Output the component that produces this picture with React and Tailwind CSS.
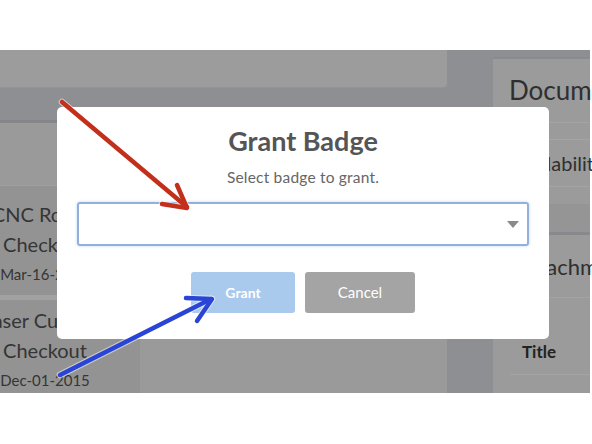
const font = "font-['Lato','Open_Sans',sans-serif]";

function CheckoutCard({ title, date, shift }) {
  return (
    <div className="w-[90px] flex flex-col items-center text-[#353535]">
      <div className={"whitespace-nowrap text-[20px] leading-[30px] " + shift}>{title}</div>
      <div className="whitespace-nowrap text-[20px] leading-[30px]">Checkout</div>
      <div className="whitespace-nowrap text-[15px] leading-[22px] mt-[4px]">{date}</div>
    </div>
  );
}

function MainColumn() {
  return (
    <div className="w-[447px] flex flex-col">
      <div className="h-[38px] bg-[#9c9c9c] rounded-br-[4px] border-b border-[#949494]" />
      <div className="h-[32px]" />
      <div className="flex-1 flex flex-col bg-[#9a9a9a] border-t-[3px] border-[#85868a]">
        <div className="h-[62px]" />
        <div className="flex-1 flex">
          <div className="w-[140px] bg-[#939393] border-t border-[#a0a0a0] flex flex-col">
            <div className="h-[109px] pt-[13px]">
              <CheckoutCard title="CNC Router" date="Mar-16-2016" shift="" />
            </div>
            <div className="h-[5px] bg-[#a1a1a1]" />
            <div className="pt-[5px]">
              <CheckoutCard title="Laser Cutter" date="Dec-01-2015" shift="-translate-x-[9px]" />
            </div>
          </div>
        </div>
      </div>
    </div>
  );
}

function SidePanel() {
  return (
    <div className="w-[97px] mt-[7px] flex flex-col bg-[#9b9b9b] border-t-[2px] border-[#8a8b8f] text-[#2f2f2f]">
      <div className="h-[64px] flex items-center pl-[16px] text-[26px] whitespace-nowrap border-b border-[#a4a4a4]">
        Documents
      </div>
      <div className="h-[17px] border-b border-[#a4a4a4]" />
      <div className="h-[47px] flex items-center pl-[16px] text-[20px] whitespace-nowrap border-b border-[#a4a4a4]">
        Availability
      </div>
      <div className="h-[17px]" />
      <div className="h-[31px] bg-[#959595] border-b-[3px] border-[#88898d]" />
      <div className="h-[63px] flex items-center pl-[24px] text-[22px] whitespace-nowrap border-b border-[#a3a3a3]">
        Attachments
      </div>
      <div className="h-[31px]" />
      <div className="h-[45px] flex items-center pl-[29px] text-[17px] font-bold text-[#222]">Title</div>
      <div className="ml-[17px] border-t border-[#a4a4a4] flex-1" />
    </div>
  );
}

function Modal() {
  return (
    <div className="absolute left-[57px] top-[107px] w-[492px] h-[232px] bg-white rounded-[5px] flex flex-col items-center">
      <div className="mt-[18px] text-[27px] leading-[32px] font-bold text-[#555]">Grant Badge</div>
      <div className="mt-[10px] text-[15.5px] leading-[20px] tracking-[0.2px] text-[#666]">
        Select badge to grant.
      </div>
      <div className="mt-[15px] w-[452px] h-[44px] rounded-[3px] border-2 border-[#93b0da] shadow-[0_0_3px_rgba(110,150,215,0.45)] flex items-center justify-end pr-[8px]">
        <svg width="12" height="7" viewBox="0 0 12 7">
          <path d="M0 0 L12 0 L6 7 Z" fill="#8a8a8a" />
        </svg>
      </div>
      <div className="mt-[26px] flex gap-[10px]">
        <button className="w-[104px] h-[41px] rounded-[3px] bg-[#a9c9ed] text-white text-[14px] font-bold">
          Grant
        </button>
        <button className="w-[110px] h-[41px] rounded-[3px] bg-[#a4a4a4] text-white text-[15px]">
          Cancel
        </button>
      </div>
    </div>
  );
}

function Arrows() {
  return (
    <svg className="absolute inset-0 pointer-events-none" width="592" height="444" viewBox="0 0 592 444">
      <g fill="none" strokeLinecap="round" strokeLinejoin="round">
        <g stroke="#ffffff" strokeOpacity="0.55" strokeWidth="6.5">
          <path d="M62 102 L187 207" />
          <path d="M177 185 L187 208 L162 204" />
          <path d="M60 375 L211 299" />
          <path d="M186 298 L212 299 L197 321" />
        </g>
        <g stroke="#c2301b" strokeWidth="4.5">
          <path d="M62 102 L187 207" />
          <path d="M177 185 L187 208 L162 204" />
        </g>
        <g stroke="#2a44d6" strokeWidth="4.5">
          <path d="M60 375 L211 299" />
          <path d="M186 298 L212 299 L197 321" />
        </g>
      </g>
    </svg>
  );
}

export default function App() {
  return (
    <div className={"relative w-[592px] h-[444px] overflow-hidden bg-white " + font}>
      <div className="h-[50px]" />
      <div className="flex h-[343px] w-[590px] bg-[#8e8f93]">
        <MainColumn />
        <div className="w-[46px]" />
        <SidePanel />
      </div>
      <Modal />
      <Arrows />
    </div>
  );
}
